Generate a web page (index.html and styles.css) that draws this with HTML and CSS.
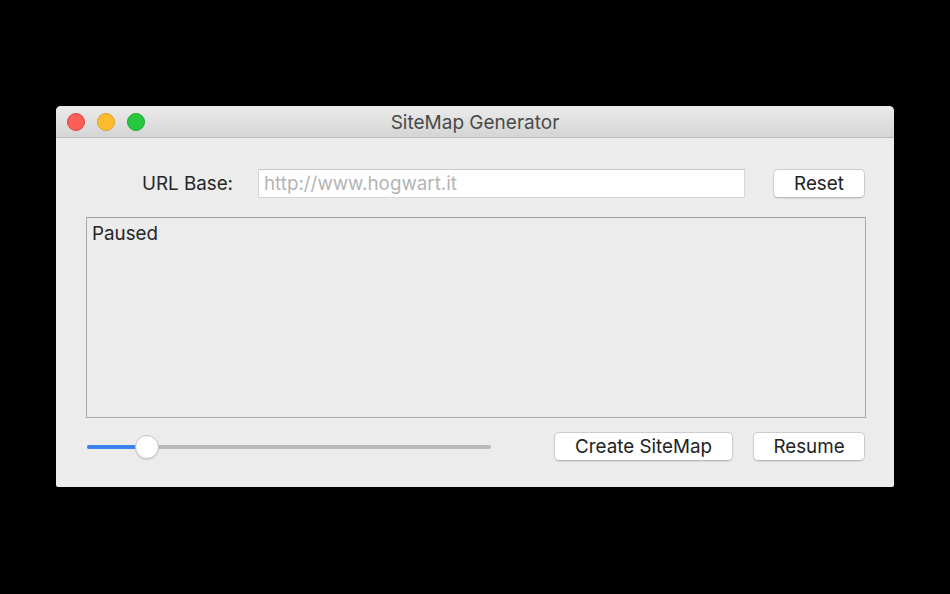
FILE: index.html
```html
<!DOCTYPE html>
<html>
<head>
<meta charset="utf-8">
<link rel="stylesheet" href="styles.css">
</head>
<body>
<div class="window">
  <div class="titlebar">
    <div class="lights">
      <span class="light red"></span>
      <span class="light yellow"></span>
      <span class="light green"></span>
    </div>
    <div class="title">SiteMap Generator</div>
  </div>
  <div class="content">
    <div class="row top">
      <label class="label">URL Base:</label>
      <div class="field"><span class="placeholder">http://www.hogwart.it</span></div>
      <button class="btn reset">Reset</button>
    </div>
    <div class="log">Paused</div>
    <div class="row bottom">
      <div class="slider">
        <div class="track"></div>
        <div class="fill"></div>
        <div class="knob"></div>
      </div>
      <button class="btn create">Create SiteMap</button>
      <button class="btn resume">Resume</button>
    </div>
  </div>
</div>
</body>
</html>
```
FILE: styles.css
```css
html, body {
  margin: 0;
  padding: 0;
  background: #000;
  width: 950px;
  height: 594px;
  overflow: hidden;
}
body {
  padding-top: 106px;
  padding-left: 56px;
  box-sizing: border-box;
  font-family: "Inter", "Roboto", "Liberation Sans", sans-serif;
}
.window {
  width: 838px;
  height: 381px;
  background: #ececec;
  border-radius: 5px 5px 2px 2px;
  overflow: hidden;
  display: flex;
  flex-direction: column;
}
.titlebar {
  height: 31px;
  flex: none;
  background: linear-gradient(#ebebeb, #d5d5d5);
  border-bottom: 1px solid #b9b9b9;
  position: relative;
  display: flex;
  align-items: center;
  justify-content: center;
}
.lights {
  position: absolute;
  left: 11px;
  top: 7px;
  display: flex;
  gap: 12px;
}
.light {
  width: 18px;
  height: 18px;
  border-radius: 50%;
  box-sizing: border-box;
}
.red { background: #fc5f57; border: 1px solid #e0443e; }
.yellow { background: #fdbc2e; border: 1px solid #dea123; }
.green { background: #28c840; border: 1px solid #1aab29; }
.title {
  font-size: 19px;
  color: #4a4a4a;
  padding-top: 1px;
}
.content {
  padding: 31px 28px 0 30px;
  display: flex;
  flex-direction: column;
}
.row {
  display: flex;
  align-items: center;
}
.top {
  height: 29px;
}
.label {
  width: 147px;
  text-align: right;
  font-size: 18.8px;
  color: #262626;
  margin-right: 25px;
}
.field {
  width: 487px;
  height: 29px;
  box-sizing: border-box;
  background: #fff;
  border: 1px solid #d6d6d6;
  border-top-color: #c8c8c8;
  display: flex;
  align-items: center;
  padding-left: 5px;
  margin-right: 28px;
}
.placeholder {
  font-size: 18.8px;
  color: #b4b4b4;
}
.btn {
  height: 29px;
  box-sizing: border-box;
  background: #fff;
  border: 1px solid #cdcdcd;
  border-bottom-color: #b8b8b8;
  border-radius: 5px;
  box-shadow: 0 1px 1px rgba(0,0,0,0.08);
  font-family: inherit;
  font-size: 18.8px;
  color: #222;
  padding: 0;
}
.reset { width: 92px; }
.log {
  margin-top: 19px;
  height: 201px;
  box-sizing: border-box;
  border: 1px solid #a9a9a9;
  border-top-color: #9e9e9e;
  background: #ececec;
  font-size: 18.8px;
  color: #262626;
  padding: 4px 0 0 5px;
}
.bottom {
  margin-top: 14px;
  height: 29px;
}
.slider {
  position: relative;
  width: 404px;
  height: 26px;
  margin-left: 1px;
  margin-right: 63px;
}
.track {
  position: absolute;
  left: 0;
  right: 0;
  top: 11px;
  height: 4px;
  border-radius: 2px;
  background: #b9b9b9;
}
.fill {
  position: absolute;
  left: 0;
  width: 60px;
  top: 11px;
  height: 4px;
  border-radius: 2px;
  background: #3b82f0;
}
.knob {
  position: absolute;
  left: 48px;
  top: 1px;
  width: 24px;
  height: 24px;
  box-sizing: border-box;
  border-radius: 50%;
  background: #fff;
  border: 1px solid #c4c4c4;
  box-shadow: 0 1px 1px rgba(0,0,0,0.12);
}
.create { width: 179px; margin-right: 20px; }
.resume { width: 112px; }
```
